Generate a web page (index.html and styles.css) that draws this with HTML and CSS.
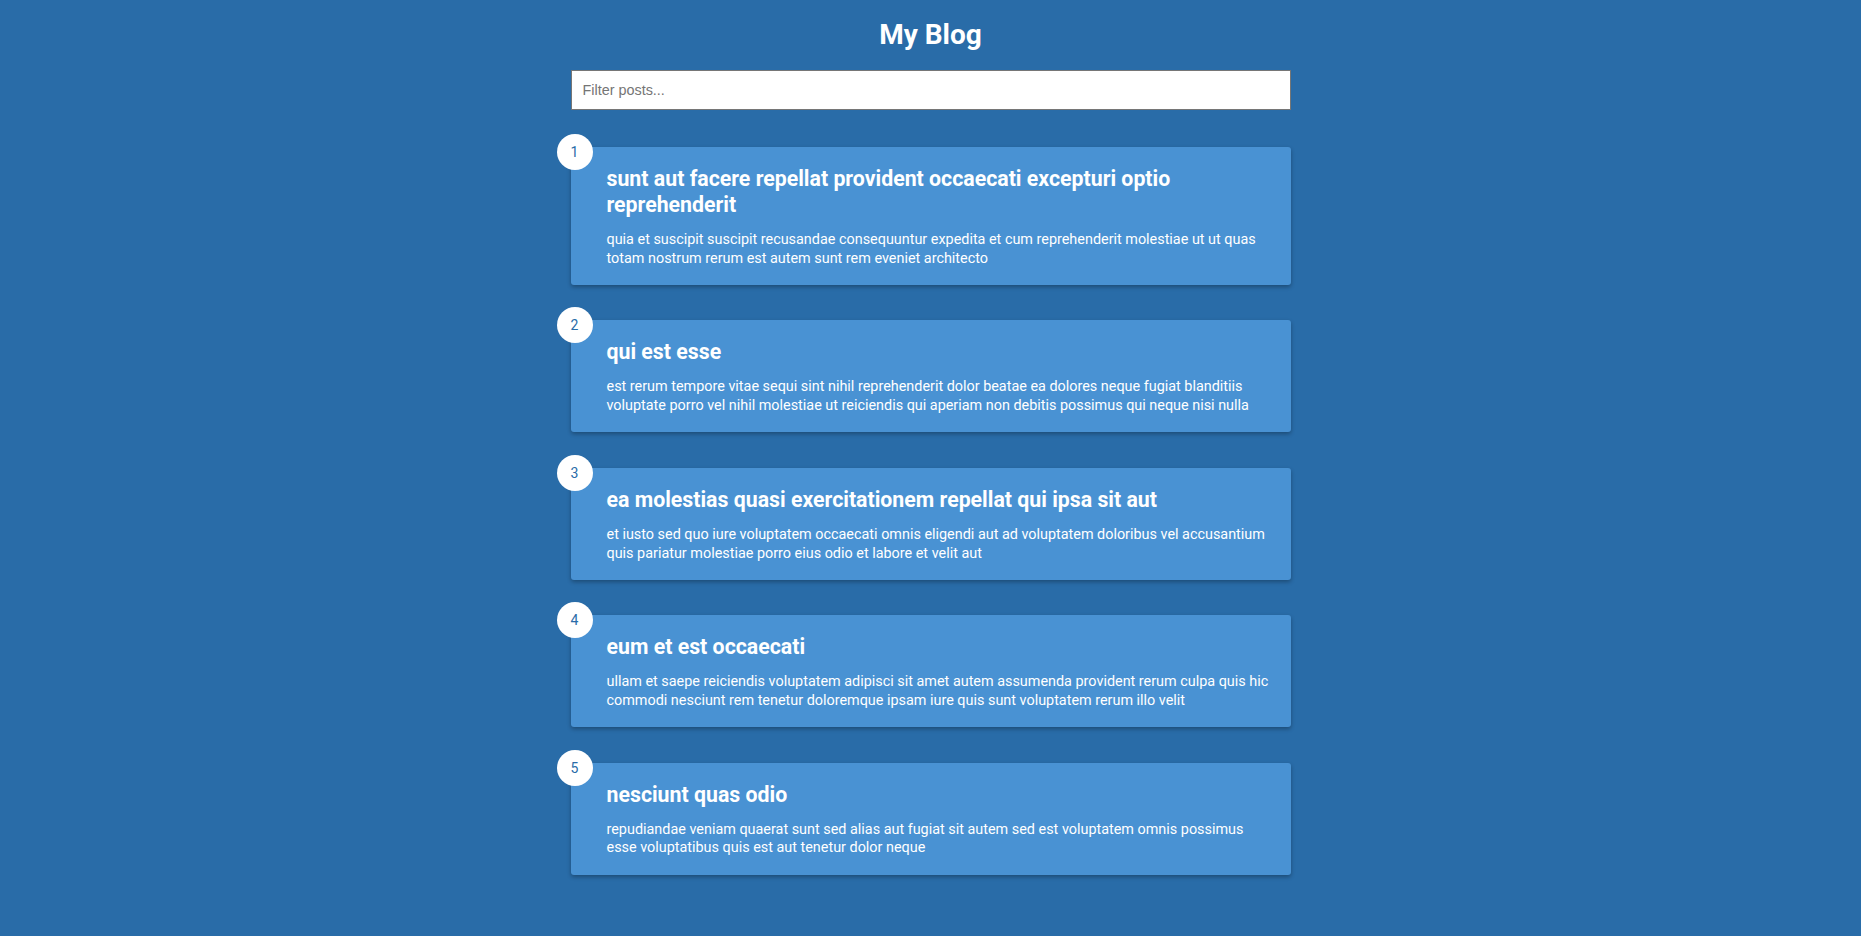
FILE: index.html
```html
<!DOCTYPE html>
<html lang="en">
<head>
<meta charset="UTF-8">
<title>My Blog</title>
<link rel="stylesheet" href="styles.css">
</head>
<body>
<main class="page">
  <h1 class="page-title">My Blog</h1>
  <div class="filter-container">
    <input type="text" class="filter" placeholder="Filter posts...">
  </div>
  <div class="posts">
    <article class="post">
      <div class="number">1</div>
      <div class="post-info">
        <h2 class="post-title">sunt aut facere repellat provident occaecati excepturi optio reprehenderit</h2>
        <p class="post-body">quia et suscipit suscipit recusandae consequuntur expedita et cum reprehenderit molestiae ut ut quas totam nostrum rerum est autem sunt rem eveniet architecto</p>
      </div>
    </article>
    <article class="post">
      <div class="number">2</div>
      <div class="post-info">
        <h2 class="post-title">qui est esse</h2>
        <p class="post-body">est rerum tempore vitae sequi sint nihil reprehenderit dolor beatae ea dolores neque fugiat blanditiis voluptate porro vel nihil molestiae ut reiciendis qui aperiam non debitis possimus qui neque nisi nulla</p>
      </div>
    </article>
    <article class="post">
      <div class="number">3</div>
      <div class="post-info">
        <h2 class="post-title">ea molestias quasi exercitationem repellat qui ipsa sit aut</h2>
        <p class="post-body">et iusto sed quo iure voluptatem occaecati omnis eligendi aut ad voluptatem doloribus vel accusantium quis pariatur molestiae porro eius odio et labore et velit aut</p>
      </div>
    </article>
    <article class="post">
      <div class="number">4</div>
      <div class="post-info">
        <h2 class="post-title">eum et est occaecati</h2>
        <p class="post-body">ullam et saepe reiciendis voluptatem adipisci sit amet autem assumenda provident rerum culpa quis hic commodi nesciunt rem tenetur doloremque ipsam iure quis sunt voluptatem rerum illo velit</p>
      </div>
    </article>
    <article class="post">
      <div class="number">5</div>
      <div class="post-info">
        <h2 class="post-title">nesciunt quas odio</h2>
        <p class="post-body">repudiandae veniam quaerat sunt sed alias aut fugiat sit autem sed est voluptatem omnis possimus esse voluptatibus quis est aut tenetur dolor neque</p>
      </div>
    </article>
  </div>
</main>
</body>
</html>
```

FILE: styles.css
```css
* {
  box-sizing: border-box;
}

html,
body {
  margin: 0;
  padding: 0;
}

body {
  background-color: #296ca8;
  color: #fff;
  font-family: Roboto, "Liberation Sans", Arial, sans-serif;
  font-size: 14px;
  min-height: 936px;
}

.page {
  display: flex;
  flex-direction: column;
  align-items: center;
  padding-top: 18px;
}

.page-title {
  margin: 0;
  font-size: 28px;
  font-weight: 700;
  line-height: normal;
  text-align: center;
}

.filter-container {
  margin-top: 19px;
  width: 720px;
}

.filter {
  display: block;
  width: 100%;
  height: 40px;
  padding: 0 11px;
  border: 1px solid #767676;
  border-radius: 0;
  background: #fff;
  font-family: "Liberation Sans", Arial, sans-serif;
  font-size: 14.4px;
  color: #222;
  outline: none;
}

.filter::placeholder {
  color: #757575;
}

.posts {
  display: flex;
  flex-direction: column;
  gap: 35.5px;
  margin-top: 37px;
  width: 720px;
}

.post {
  position: relative;
  display: flex;
  background-color: #4992d3;
  box-shadow: 0 2px 4px rgba(0, 0, 0, 0.3);
  border-radius: 3px;
  padding: 19px 20px 16.5px 36px;
  line-height: 1.3;
}

.number {
  position: absolute;
  top: -13px;
  left: -14px;
  width: 36px;
  height: 36px;
  border-radius: 50%;
  background: #fff;
  color: #296ca8;
  font-size: 14px;
  display: flex;
  align-items: center;
  justify-content: center;
}

.post-title {
  margin: 0;
  font-size: 21.3px;
  line-height: 26px;
  font-weight: 700;
}

.post-body {
  margin: 13px 0 0;
  font-size: 14.4px;
}
```
